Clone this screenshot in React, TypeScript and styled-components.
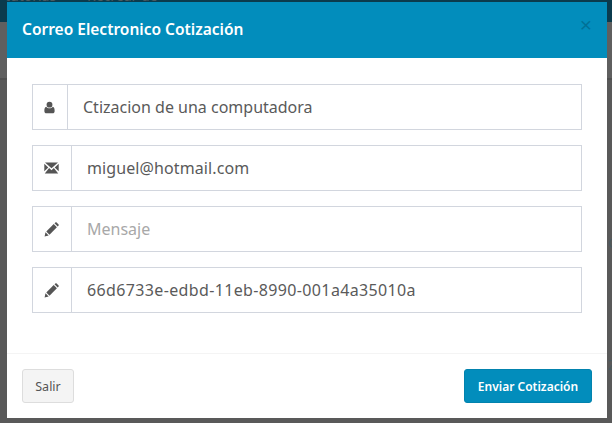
import React from 'react';
import styled, { createGlobalStyle } from 'styled-components';

const Global = createGlobalStyle`
  html, body {
    margin: 0;
    padding: 0;
    height: 100%;
    overflow: hidden;
  }
  body {
    font-family: "Noto Sans", "Open Sans", sans-serif;
    background: #5a5a5a;
  }
`;

const Backdrop = styled.div`
  position: relative;
  width: 612px;
  height: 423px;
  overflow: hidden;
  background: linear-gradient(
    #0b3b4d 0 22px,
    #5f5f5f 22px 78px,
    #505050 78px 80px,
    #595959 80px
  );
  padding: 2px 5px 5px 7px;
  box-sizing: border-box;
`;

/* page text showing behind the dimmed backdrop, cut off by the modal */
const BehindText = styled.span<{ $x: number; $y: number }>`
  position: absolute;
  left: ${p => p.$x}px;
  top: ${p => p.$y}px;
  font-size: 14px;
  line-height: 14px;
  white-space: nowrap;
  color: #4a5a60;
`;

const Modal = styled.div`
  position: relative;
  width: 600px;
  height: 416px;
  background: #fff;
  display: flex;
  flex-direction: column;
`;

const Header = styled.header`
  height: 56px;
  flex: none;
  background: #028dbc;
  color: #fff;
  display: flex;
  align-items: center;
  justify-content: space-between;
  padding: 0 15px;
  box-sizing: border-box;
`;

const Title = styled.h4`
  margin: -2px 0 0;
  font-size: 15.5px;
  font-weight: 600;
`;

const Close = styled.span`
  font-family: "Liberation Sans", sans-serif;
  font-size: 21px;
  font-weight: 400;
  color: #000;
  opacity: 0.2;
  line-height: 1;
  margin-top: -12px;
`;

const Body = styled.div`
  flex: 1;
  padding: 26px 25px 0;
  display: flex;
  flex-direction: column;
  gap: 15px;
`;

const Group = styled.div`
  display: flex;
  height: 46px;
  width: 550px;
  box-sizing: border-box;
  border: 1px solid #d2d6de;
`;

const Addon = styled.span<{ $narrow?: boolean }>`
  width: ${p => (p.$narrow ? 34 : 38)}px;
  flex: none;
  display: flex;
  align-items: center;
  justify-content: center;
  border-right: 1px solid #d2d6de;
  color: #555;
`;

const Icon = styled.svg<{ $shift: number }>`
  margin-left: ${p => p.$shift}px;
  fill: currentColor;
`;

const Field = styled.div<{ $placeholder?: boolean; $spacing?: number }>`
  flex: 1;
  padding-left: 15px;
  display: flex;
  align-items: center;
  font-size: 16px;
  letter-spacing: ${p => p.$spacing ?? 0}px;
  color: ${p => (p.$placeholder ? '#a8a8a8' : '#5a5a5a')};
`;

const Footer = styled.footer`
  height: 65px;
  flex: none;
  border-top: 1px solid #f4f4f4;
  box-sizing: border-box;
  display: flex;
  align-items: center;
  justify-content: space-between;
  padding: 0 15px;
`;

const Button = styled.button<{ $primary?: boolean }>`
  height: 34px;
  box-sizing: border-box;
  border-radius: 3px;
  font-family: inherit;
  font-size: ${p => (p.$primary ? 12 : 12.5)}px;
  padding: 0;
  width: ${p => (p.$primary ? 128 : 52)}px;
  font-weight: ${p => (p.$primary ? 600 : 400)};
  color: ${p => (p.$primary ? '#fff' : '#555')};
  background: ${p => (p.$primary ? '#028dbc' : '#f4f4f4')};
  border: 1px solid ${p => (p.$primary ? '#0283ae' : '#ddd')};
`;

const UserIcon = () => (
  <Icon $shift={-1} width="11" height="13" viewBox="0 0 12 13">
    <circle cx="6" cy="3.4" r="3.2" />
    <path d="M2.4 5.6C3.4 6.9 4.6 7.3 6 7.3s2.6-.4 3.6-1.7c1.4.3 2 1.900 2 4.600 0 1.600-.9 2.500-2.200 2.500H2.600C1.300 12.700.4 11.800.4 10.200c0-2.700.6-4.300 2-4.600z" />
  </Icon>
);

const MailIcon = () => (
  <Icon $shift={-1} width="15" height="12" viewBox="0 0 15 12">
    <path d="M1 .5h13L7.500 6.300z" />
    <path d="M.3 1.800 4.300 5.400.3 9.200zM14.700 1.800l-4 3.600 4 3.800z" />
    <path d="M5.100 6.100 7.500 8.200l2.400-2.100 4.300 5.400H.8z" />
  </Icon>
);

const PencilIcon = () => (
  <Icon $shift={-2} width="15" height="15" viewBox="0 0 15 15">
    <path d="M.6 14.400 1.500 10.300 4.700 13.500z" />
    <path d="M2.300 9.500 9.700 2.100 12.900 5.300 5.500 12.700z" />
    <path d="M10.500 1.300 11.400.4c.4-.3.9-.3 1.200 0l2 2c.3.3.3.8 0 1.200l-.9.9z" />
  </Icon>
);

const rows = [
  { icon: <UserIcon />, narrow: true, text: 'Ctizacion de una computadora' },
  { icon: <MailIcon />, text: 'miguel@hotmail.com', spacing: 0.1 },
  { icon: <PencilIcon />, text: 'Mensaje', placeholder: true },
  { icon: <PencilIcon />, text: '66d6733e-edbd-11eb-8990-001a4a35010a', spacing: 0.36 },
];

export default function App() {
  return (
    <Backdrop>
      <Global />
      <BehindText $x={5} $y={-11}>tutorias ·</BehindText>
      <BehindText $x={87} $y={-11}>Recrear de</BehindText>
      <BehindText $x={608} $y={236}>C</BehindText>
      <BehindText $x={608} $y={358}>Z</BehindText>
      <Modal>
        <Header>
          <Title>Correo Electronico Cotización</Title>
          <Close>×</Close>
        </Header>
        <Body>
          {rows.map(row => (
            <Group key={row.text}>
              <Addon $narrow={row.narrow}>{row.icon}</Addon>
              <Field $placeholder={row.placeholder} $spacing={row.spacing}>{row.text}</Field>
            </Group>
          ))}
        </Body>
        <Footer>
          <Button>Salir</Button>
          <Button $primary>Enviar Cotización</Button>
        </Footer>
      </Modal>
    </Backdrop>
  );
}
